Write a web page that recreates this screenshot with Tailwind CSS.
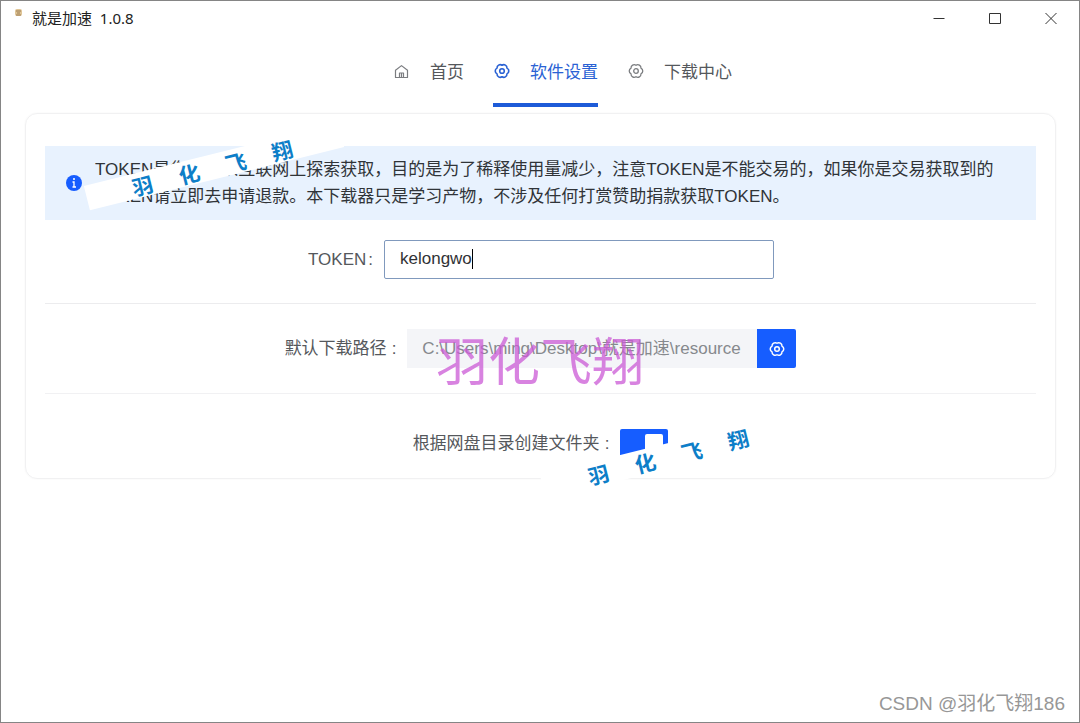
<!DOCTYPE html>
<html lang="zh-CN">
<head>
<meta charset="utf-8">
<meta name="viewport" content="width=device-width, initial-scale=1">
<title>就是加速</title>
<script src="https://cdn.jsdelivr.net/npm/@tailwindcss/browser@4"></script>
</head>
<body class="bg-white font-['Liberation_Sans','Noto_Sans_CJK_SC',sans-serif] text-[17px] text-[#55585c]">
<svg class="hidden" aria-hidden="true">
  <symbol id="gear" viewBox="0 0 16 16" fill="none" stroke="currentColor" stroke-linejoin="round">
    <path d="M12.980 5.130A3.200 3.200 0 0 1 12.980 10.870A3.200 3.200 0 0 1 8 13.750A3.200 3.200 0 0 1 3.020 10.870A3.200 3.200 0 0 1 3.020 5.130A3.200 3.200 0 0 1 8 2.250A3.200 3.200 0 0 1 12.980 5.130Z"/>
    <circle cx="8" cy="8" r="2.300"/>
  </symbol>
</svg>
<div class="relative flex min-h-screen flex-col overflow-hidden border border-[#858585]">
  <header class="flex h-[34px] items-center justify-between pl-[13px] pr-[22px] text-[#222]">
    <div class="flex items-center gap-[9px]">
      <svg class="mb-3 h-[9px] w-[9px]" viewBox="0 0 9 9"><rect x="1" y="1" width="7" height="7" rx="2" fill="#dfc596"/><path d="M2 3h5M3 5h3M2 7h5" stroke="#9b7a50"/></svg>
      <h1 class="whitespace-pre font-['Noto_Sans','Noto_Sans_CJK_SC',sans-serif] text-[15px] leading-5">就是加速  1.0.8</h1>
    </div>
    <div class="flex items-center gap-[44px] text-[#333]">
      <button aria-label="最小化"><svg class="size-3" viewBox="0 0 12 12" fill="none" stroke="currentColor"><path d="M.5 6.500h11"/></svg></button>
      <button aria-label="最大化"><svg class="size-3" viewBox="0 0 12 12" fill="none" stroke="currentColor"><path d="M.5 1.500h11v10H.5z"/></svg></button>
      <button aria-label="关闭"><svg class="size-3" viewBox="0 0 12 12" fill="none" stroke="currentColor"><path d="M.5 1l11 11M11.500 1l-11 11"/></svg></button>
    </div>
  </header>

  <nav class="flex justify-center gap-[29px] pl-[45px]">
    <a href="#" class="flex h-[72px] items-center gap-5 border-b-4 border-transparent pl-px pt-1">
      <svg class="size-[15px] text-[#7b7d80]" viewBox="0 0 15 15" fill="none" stroke="currentColor" stroke-width="1.200" stroke-linejoin="round"><path d="M1.500 13.500V6.300L7.500 1.600l6 4.700v7.200zM5.500 13.500V9h4v4.500M7.500 9v4"/></svg>
      <span class="pl-px pt-[3px]">首页</span>
    </a>
    <a href="#" class="flex h-[72px] items-center gap-5 border-b-4 border-[#1d5bd8] pl-px pt-1 text-[#2a62d4]" aria-current="page">
      <svg class="size-4 stroke-[1.6]"><use href="#gear"/></svg>
      <span class="pt-[3px]">软件设置</span>
    </a>
    <a href="#" class="flex h-[72px] items-center gap-5 border-b-4 border-transparent pl-px pt-1">
      <svg class="size-4 stroke-[1.3] text-[#7b7d80]"><use href="#gear"/></svg>
      <span class="pt-[3px]">下载中心</span>
    </a>
  </nav>

  <main class="ml-6 mr-[23px] mt-[6px] rounded-xl border border-[#f1f1f2] px-[19px] pb-[21px] pt-8 shadow-[0_0_2px_#f4f4f4]">
    <div class="flex items-center gap-3 bg-[#e8f2fe] px-[21px] py-[10px] text-[#303438]">
      <svg class="size-4 shrink-0" viewBox="0 0 16 16"><circle cx="8" cy="8" r="8" fill="#165dff"/><path d="M7 4h2M6.500 7H8v5M6.500 12h3.500" fill="none" stroke="#fff" stroke-width="1.300"/></svg>
      <p class="pl-px leading-[27px]">TOKEN是您自行从互联网上探索获取，目的是为了稀释使用量减少，注意TOKEN是不能交易的，如果你是交易获取到的<br>TOKEN请立即去申请退款。本下载器只是学习产物，不涉及任何打赏赞助捐款获取TOKEN。</p>
    </div>

    <form>
      <div class="flex items-center justify-center gap-[11px] border-b border-[#ececee] pb-6 pt-5">
        <label for="token" class="pl-px">TOKEN<span class="ml-[2px]">:</span></label>
        <div class="relative">
          <input id="token" type="text" value="kelongwo" class="h-[39px] w-[390px] rounded-xs border border-[#8099bd] px-[15px] pb-[2px] text-[#303236] outline-none">
          <span class="absolute left-[88px] top-[9px] h-5 w-px bg-black"></span>
        </div>
      </div>

      <div class="flex items-center justify-center gap-[11px] border-b border-[#f1f1f3] py-[25px]">
        <label for="path">默认下载路径<span class="ml-[5px]">:</span></label>
        <div class="flex">
          <input id="path" type="text" disabled value="C:\Users\ming\Desktop\就是加速\resource" class="h-[39px] w-[350px] bg-[#f4f5f8] px-[15px] pb-1 text-[#86898d]">
          <button type="button" aria-label="选择路径" class="flex w-[39px] items-center justify-center rounded-r-xs bg-[#165dff] text-white"><svg class="size-4 stroke-[1.5]"><use href="#gear"/></svg></button>
        </div>
      </div>

      <div class="flex items-center justify-center gap-[11px] pt-[35px]">
        <label for="folder" class="pt-[2px]">根据网盘目录创建文件夹<span class="ml-[5px]">:</span></label>
        <input id="folder" type="checkbox" role="switch" checked class="flex h-7 w-12 appearance-none justify-end rounded-xs bg-[#165dff] p-[5px] before:h-[18px] before:w-[18px] before:rounded-xs before:bg-white before:content-['']">
      </div>
    </form>
  </main>

  <!-- Watermarks laid over the page -->
  <div class="absolute left-[82px] top-[153px] flex h-[25px] w-[262px] -rotate-14 items-center justify-center gap-[27px] bg-white pr-1 pt-1 text-[21px] font-bold leading-none text-[#0d7ec8]"><span>羽</span><span>化</span><span>飞</span><span>翔</span></div>
  <div class="absolute left-[538px] top-[442px] flex h-[25px] w-[262px] -rotate-14 items-center justify-center gap-[27px] bg-white pr-1 pt-1 text-[21px] font-bold leading-none text-[#0d7ec8]"><span>羽</span><span>化</span><span>飞</span><span>翔</span></div>
  <div class="absolute left-[435px] top-[336px] text-[52px] leading-[52px] text-[#cb59d6]/75">羽化飞翔</div>
  <div class="absolute bottom-[6px] right-[14px] text-[19px] leading-6 text-[#979797]">CSDN @羽化飞翔186</div>
</div>
</body>
</html>
